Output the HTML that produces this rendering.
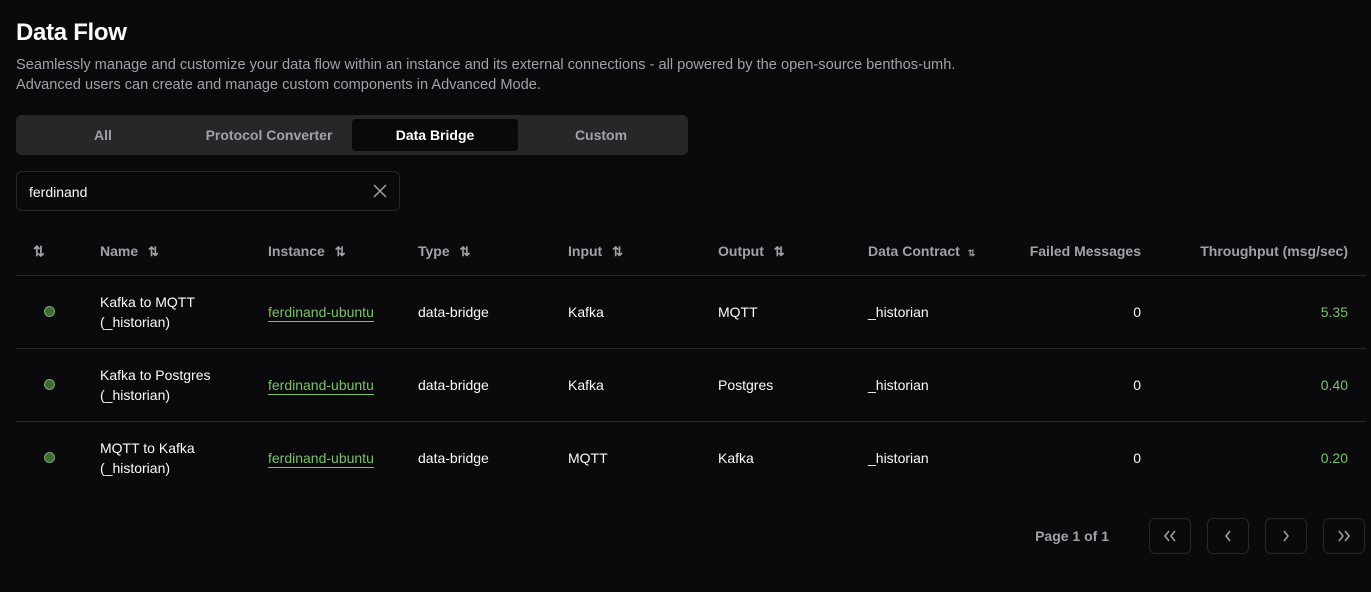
<!DOCTYPE html>
<html><head><style>
*{margin:0;padding:0;box-sizing:border-box}
body{width:1371px;height:592px;background:#0a0a0c;color:#fafafa;font-family:"Liberation Sans",sans-serif;position:relative;overflow:hidden}
.a{position:absolute;white-space:nowrap}
h1{position:absolute;left:16px;top:19px;font-size:24px;font-weight:bold;letter-spacing:-0.3px}
.sub{left:16px;color:#a1a1aa;font-size:14.6px}
.tabs{left:16px;top:115px;width:672px;height:40px;background:#27272a;border-radius:6px}
.tab{top:0;height:40px;line-height:40px;text-align:center;width:166px;color:#a1a1aa;font-size:14px;font-weight:bold}
.act{left:336px;top:4px;width:166px;height:32px;background:#09090b;border-radius:4px;color:#fff;line-height:32px}
.search{left:16px;top:171px;width:384px;height:40px;border:1px solid #27272a;border-radius:6px}
.th{top:243px;color:#a1a1aa;font-size:14px;font-weight:bold}
.line{left:16px;width:1350px;height:1px;background:#27272a}
.td{font-size:14px;color:#fafafa}
.dot{width:11px;height:11px;border-radius:50%;background:#3f6b34;border:1px solid #7aa86c}
.lnk{color:#7bc06a;border-bottom:1px solid #7bc06a;padding-bottom:1px}
.g{color:#7bc06a}
.btn{top:518px;width:42px;height:36px;border:1px solid #27272a;border-radius:6px}
.s{color:#a1a1aa;font-size:13px;margin-left:6px}
</style></head><body>
<h1>Data Flow</h1>
<div class="a sub" style="top:57px">Seamlessly manage and customize your data flow within an instance and its external connections - all powered by the open-source benthos-umh.</div>
<div class="a sub" style="top:77px">Advanced users can create and manage custom components in Advanced Mode.</div>
<div class="a tabs">
<div class="a tab" style="left:4px">All</div>
<div class="a tab" style="left:170px">Protocol Converter</div>
<div class="a tab act">Data Bridge</div>
<div class="a tab" style="left:502px">Custom</div>
</div>
<div class="a search"><span class="a" style="left:12px;top:12px;font-size:14px">ferdinand</span>
<svg class="a" style="left:355px;top:11px" width="16" height="16" viewBox="0 0 16 16"><path d="M2 2L14 14M14 2L2 14" stroke="#a1a1aa" stroke-width="1.5"/></svg></div>

<div class="a th" style="left:33px">⇅</div>
<div class="a th" style="left:100px">Name <span class="s">⇅</span></div>
<div class="a th" style="left:268px">Instance <span class="s">⇅</span></div>
<div class="a th" style="left:418px">Type <span class="s">⇅</span></div>
<div class="a th" style="left:568px">Input <span class="s">⇅</span></div>
<div class="a th" style="left:718px">Output <span class="s">⇅</span></div>
<div class="a th" style="left:868px">Data Contract <span style="font-size:9px;margin-left:4px">⇅</span></div>
<div class="a th" style="right:230px">Failed Messages</div>
<div class="a th" style="right:23px">Throughput (msg/sec)</div>
<div class="a line" style="top:275px"></div>
<div class="a line" style="top:348px"></div>
<div class="a line" style="top:421px"></div>

<div class="a dot" style="left:44px;top:306px"></div>
<div class="a td" style="left:100px;top:292px;line-height:20px">Kafka to MQTT<br>(_historian)</div>
<div class="a td lnk" style="left:268px;top:304px">ferdinand-ubuntu</div>
<div class="a td" style="left:418px;top:304px">data-bridge</div>
<div class="a td" style="left:568px;top:304px">Kafka</div>
<div class="a td" style="left:718px;top:304px">MQTT</div>
<div class="a td" style="left:868px;top:304px">_historian</div>
<div class="a td" style="right:230px;top:304px">0</div>
<div class="a td g" style="right:23px;top:304px">5.35</div>

<div class="a dot" style="left:44px;top:379px"></div>
<div class="a td" style="left:100px;top:365px;line-height:20px">Kafka to Postgres<br>(_historian)</div>
<div class="a td lnk" style="left:268px;top:377px">ferdinand-ubuntu</div>
<div class="a td" style="left:418px;top:377px">data-bridge</div>
<div class="a td" style="left:568px;top:377px">Kafka</div>
<div class="a td" style="left:718px;top:377px">Postgres</div>
<div class="a td" style="left:868px;top:377px">_historian</div>
<div class="a td" style="right:230px;top:377px">0</div>
<div class="a td g" style="right:23px;top:377px">0.40</div>

<div class="a dot" style="left:44px;top:452px"></div>
<div class="a td" style="left:100px;top:438px;line-height:20px">MQTT to Kafka<br>(_historian)</div>
<div class="a td lnk" style="left:268px;top:450px">ferdinand-ubuntu</div>
<div class="a td" style="left:418px;top:450px">data-bridge</div>
<div class="a td" style="left:568px;top:450px">MQTT</div>
<div class="a td" style="left:718px;top:450px">Kafka</div>
<div class="a td" style="left:868px;top:450px">_historian</div>
<div class="a td" style="right:230px;top:450px">0</div>
<div class="a td g" style="right:23px;top:450px">0.20</div>

<div class="a" style="right:262px;top:528px;font-size:14px;font-weight:bold;color:#a1a1aa">Page 1 of 1</div>
<div class="a btn" style="left:1149px"><svg width="40" height="34" viewBox="0 0 40 34"><path d="M19 12L15 17L19 22M25 12L21 17L25 22" stroke="#a1a1aa" stroke-width="1.5" fill="none"/></svg></div>
<div class="a btn" style="left:1207px"><svg width="40" height="34" viewBox="0 0 40 34"><path d="M22 12L18 17L22 22" stroke="#a1a1aa" stroke-width="1.5" fill="none"/></svg></div>
<div class="a btn" style="left:1265px"><svg width="40" height="34" viewBox="0 0 40 34"><path d="M18 12L22 17L18 22" stroke="#a1a1aa" stroke-width="1.5" fill="none"/></svg></div>
<div class="a btn" style="left:1323px"><svg width="40" height="34" viewBox="0 0 40 34"><path d="M15 12L19 17L15 22M21 12L25 17L21 22" stroke="#a1a1aa" stroke-width="1.5" fill="none"/></svg></div>
</body></html>
